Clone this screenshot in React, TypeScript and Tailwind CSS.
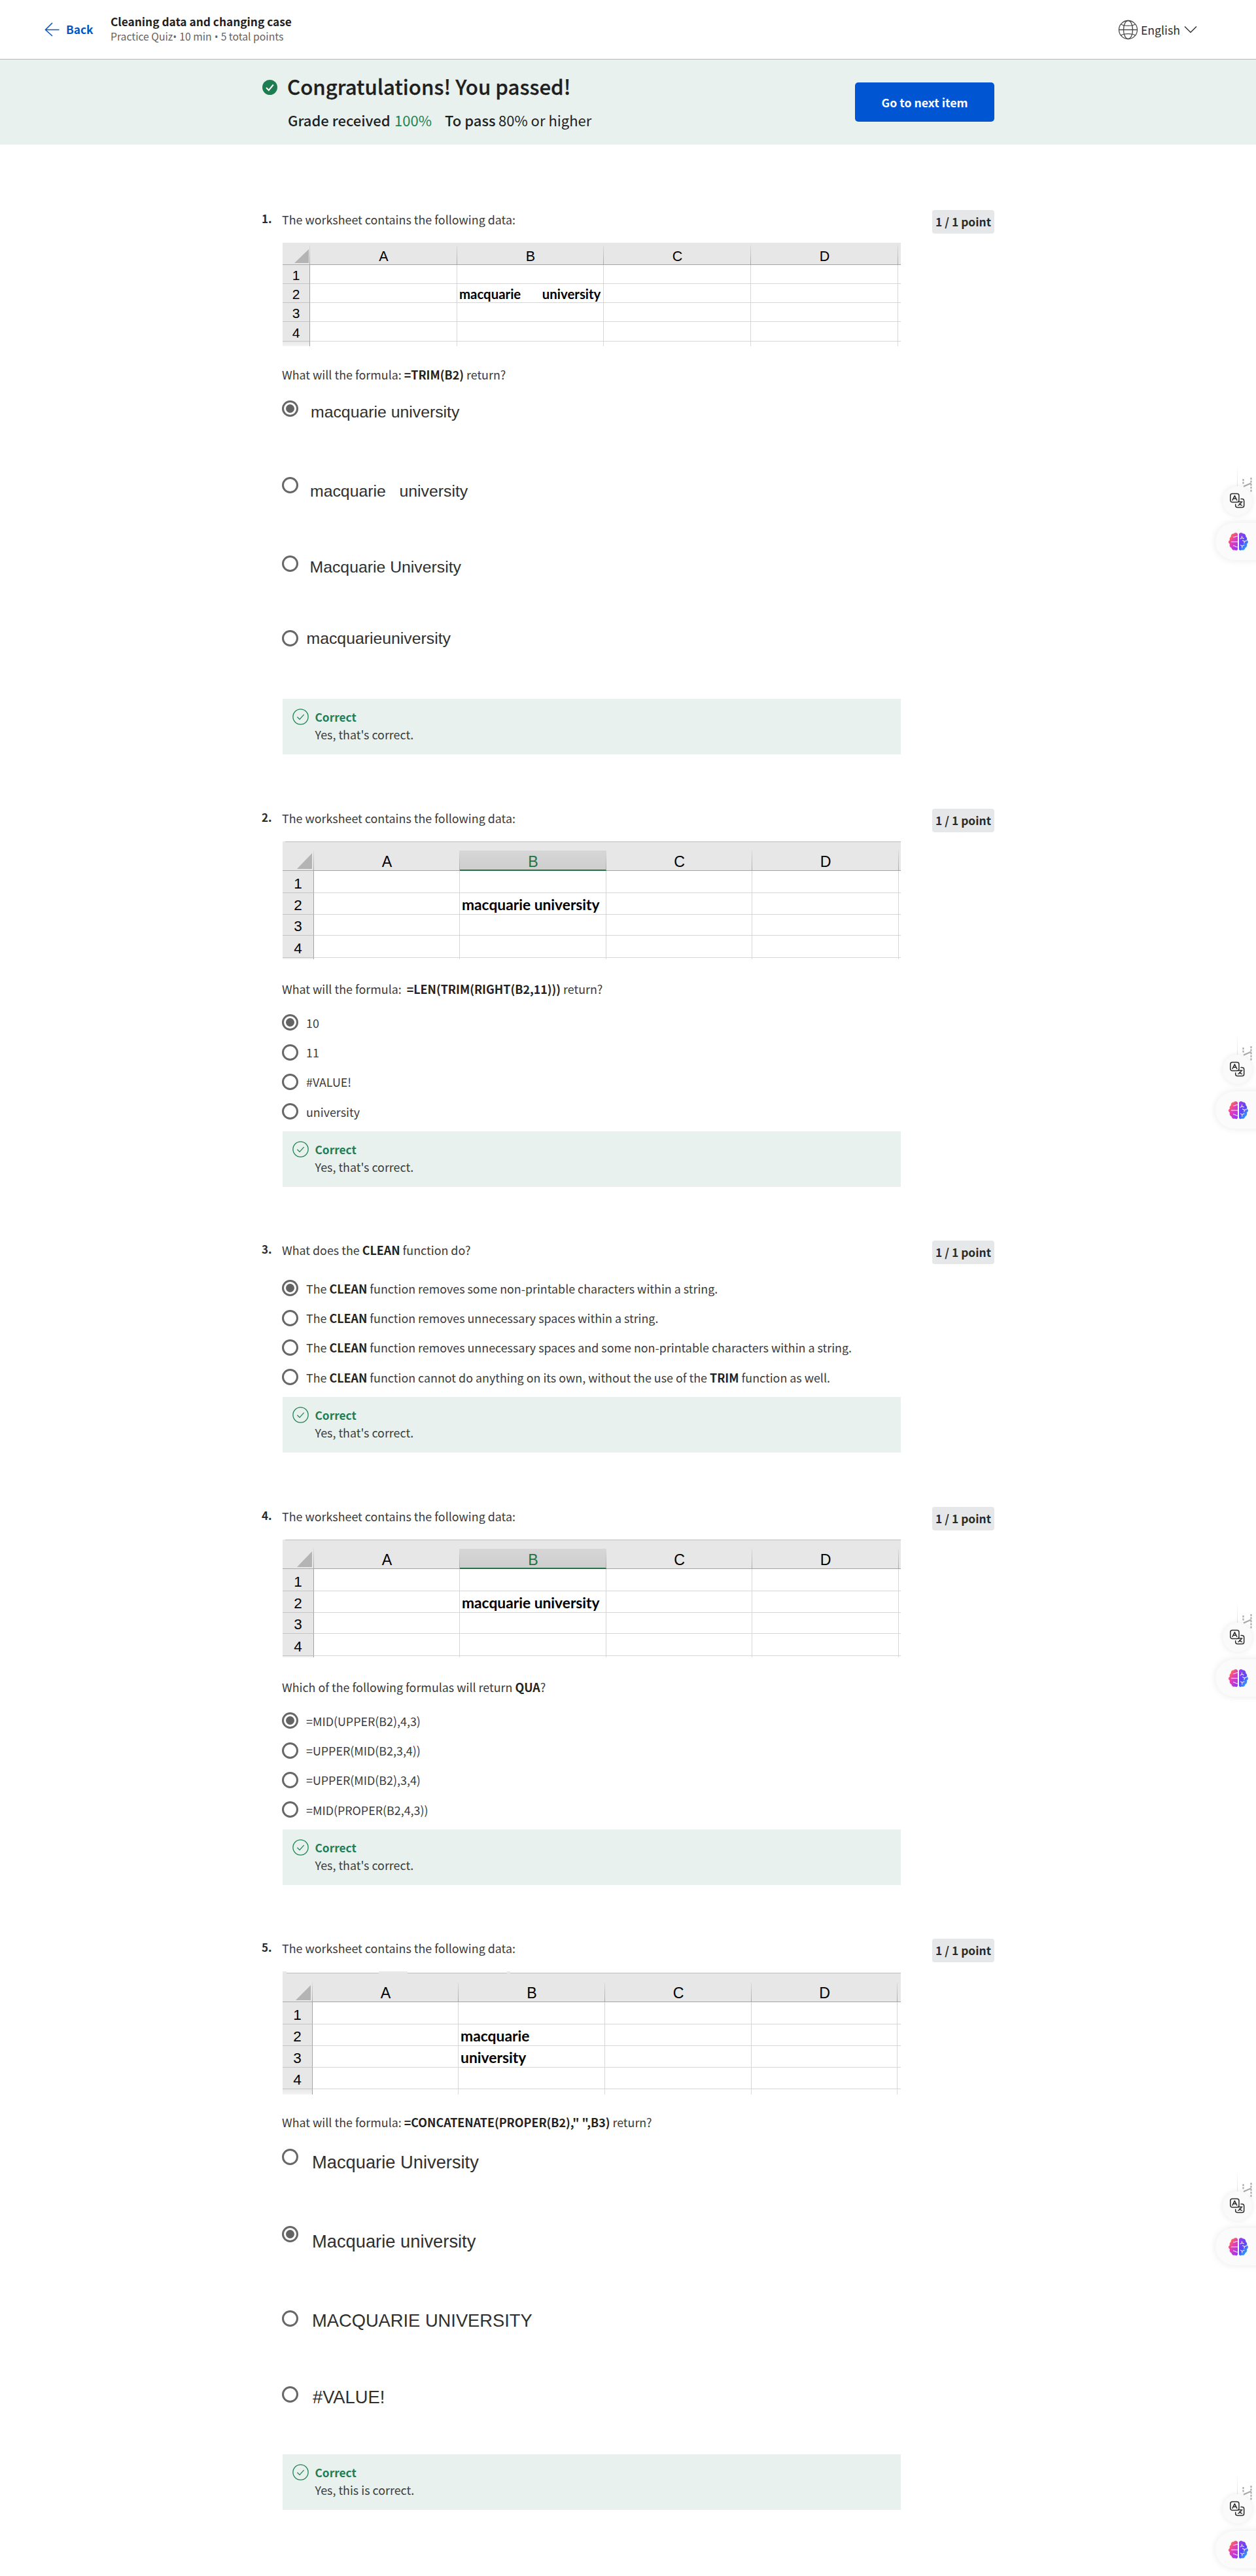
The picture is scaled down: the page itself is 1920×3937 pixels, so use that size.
import type { ReactNode } from "react";

type SheetSpec = {
  grid: string;
  digits: string;
  letters: string;
  cell: string;
  triangle: string;
  letterTop: string;
  selectedB?: boolean;
  tabStrip?: boolean;
  topLine?: boolean;
  b2: string;
  b3?: string;
};

const sheetOne: SheetSpec = {
  grid: "grid-cols-[42px_225px_224px_225px_225px_4px] grid-rows-[34px_29px_29px_29px_30px_7px]",
  letters: "text-[21.5px] leading-[23px]",
  digits: "text-[21px] leading-[24px]",
  cell: "text-[20.4px] leading-[25px] [word-spacing:-0.3px]",
  triangle: "w-[22px] h-[21px] mr-[2px] mb-[2px]",
  letterTop: "top-[4px]",
  b2: "macquarie       university",
};

const sheetTwo: SheetSpec = {
  grid: "grid-cols-[48px_223px_224px_223px_224px_3px] grid-rows-[45px_34px_33px_32px_34px_2px]",
  letters: "text-[23.2px] leading-[25px]",
  digits: "text-[22.5px] leading-[26px]",
  cell: "text-[22.75px] leading-[29px]",
  triangle: "w-[23px] h-[24px] mr-[3px] mb-[2px]",
  letterTop: "top-[14px]",
  selectedB: true,
  topLine: true,
  b2: "macquarie university",
};

const sheetFive: SheetSpec = {
  grid: "grid-cols-[46px_223px_224px_224px_223px_5px] grid-rows-[47px_34px_33px_33px_33px_8px]",
  letters: "text-[23.2px] leading-[26px]",
  digits: "text-[22.5px] leading-[26px]",
  cell: "text-[22.85px] leading-[29px]",
  triangle: "w-[23px] h-[23px] mr-[3px] mb-[2px]",
  letterTop: "top-[17px]",
  tabStrip: true,
  b2: "macquarie",
  b3: "university",
};

function Sheet({ s }: { s: SheetSpec }) {
  const letters = ["A", "B", "C", "D"];
  return (
    <div className="relative ml-px w-[945px] bg-white font-['Liberation_Sans',sans-serif] text-black">
      <div className={`grid ${s.grid}`}>
        <div className="flex items-end justify-end border-b border-[#a9a9a9] bg-[#e7e7e7]">
          <div className={`bg-[#b4b4b4] [clip-path:polygon(100%_0,100%_100%,0_100%)] ${s.triangle}`} />
        </div>
        {letters.map((l) => {
          const selected = s.selectedB && l === "B";
          return (
            <div
              key={l}
              className={`relative flex items-end justify-center border-b border-[#a3a3a3] bg-[#e7e7e7] ${s.letters}`}
            >
              <span className={`absolute bottom-0 left-[-1px] w-px bg-linear-to-b from-[#dcdcdc] to-[#a9a9a9] ${s.letterTop}`} />
              {selected && (
                <span className="absolute inset-x-0 bottom-[-1px] top-[14px] border-b-2 border-[#217346] bg-linear-to-b from-[#d6d6d6] to-[#cecece]" />
              )}
              <span className={selected ? "relative text-[#217346]" : "relative"}>{l}</span>
            </div>
          );
        })}
        <div className="relative border-b border-[#a3a3a3] bg-[#e7e7e7]">
          <span className={`absolute bottom-0 left-[-1px] w-px bg-linear-to-b from-[#dcdcdc] to-[#a9a9a9] ${s.letterTop}`} />
        </div>
        {[1, 2, 3, 4].map((n) => (
          <Row key={n} n={n} s={s} />
        ))}
        <div className="border-r border-[#a3a3a3] bg-linear-to-b from-[#e7e7e7] to-[#f4f4f4]" />
        <div className="border-r border-[#dadada]" />
        <div className="border-r border-[#dadada]" />
        <div className="border-r border-[#dadada]" />
        <div className="border-r border-[#dadada]" />
        <div />
      </div>
      {s.topLine && <div className="absolute left-1 right-0 top-0 h-px bg-[#bdbdbd]" />}
      {s.tabStrip && (
        <div className="absolute inset-x-0 top-0 flex h-[3px]">
          <div className="ml-[6px] w-[141px] border-b border-[#bdbdbd] bg-white" />
          <div className="ml-[44px] w-[152px] border-b border-[#bdbdbd] bg-white" />
          <div className="ml-[5px] grow border-b border-[#bdbdbd] bg-white" />
        </div>
      )}
    </div>
  );
}

function Row({ n, s }: { n: number; s: SheetSpec }) {
  const value = n === 2 ? s.b2 : n === 3 ? s.b3 : undefined;
  return (
    <>
      <div className={`flex items-end justify-center border-b border-r border-b-[#c4c4c4] border-r-[#a3a3a3] bg-[#e7e7e7] ${s.digits}`}>
        {n}
      </div>
      <div className="border-b border-r border-[#d6d6d6]" />
      <div className={`flex items-end whitespace-pre border-b border-r border-[#d6d6d6] pl-[3px] font-['Lato',sans-serif] font-bold ${s.cell}`}>
        {value}
      </div>
      <div className="border-b border-r border-[#d6d6d6]" />
      <div className="border-b border-r border-[#d6d6d6]" />
      <div className="border-b border-[#d6d6d6]" />
    </>
  );
}

function Radio({ on }: { on?: boolean }) {
  return (
    <span className="flex size-[25px] shrink-0 items-center justify-center rounded-full border-3 border-[#676767] bg-white">
      {on && <span className="size-[13px] rounded-full bg-[#636363]" />}
    </span>
  );
}

function Choice({ on, children }: { on?: boolean; children: ReactNode }) {
  return (
    <div className="flex h-[45.4px] items-center text-[#3a3a3a]">
      <Radio on={on} />
      <span className="ml-[12px] leading-[30px] [&_b]:text-[#222]">{children}</span>
    </div>
  );
}

function PictureChoice({ on, box, text, children }: { on?: boolean; box: string; text: string; children: ReactNode }) {
  return (
    <div className={`flex items-start ${box}`}>
      <Radio on={on} />
      <span className={`whitespace-pre font-['Liberation_Sans',sans-serif] leading-[30px] text-[#2f2f2f] ${text}`}>
        {children}
      </span>
    </div>
  );
}

function Feedback({ className, children }: { className?: string; children: ReactNode }) {
  return (
    <div className={`ml-px flex h-[85px] w-[945px] bg-[#e8f1ed] pl-[15px] ${className ?? ""}`}>
      <svg className="mt-[15px] size-[25px]" viewBox="0 0 25 25" fill="none" stroke="#1f8354" strokeWidth="1.3">
        <circle cx="12.5" cy="12.5" r="11.6" />
        <path d="M7.4 12.8l3.6 3.6 6.6-7.3" />
      </svg>
      <div className="ml-[9.5px] pt-[14px] leading-[27px]">
        <div className="text-[17.3px] font-bold text-[#237d54]">Correct</div>
        <div className="text-[#3a3d3c]">{children}</div>
      </div>
    </div>
  );
}

function Question({ n, height, prompt, children }: { n: number; height: string; prompt: ReactNode; children: ReactNode }) {
  return (
    <section className={`flex ${height}`}>
      <div className="w-[31px] text-[17px] font-bold leading-[27px]">{n}.</div>
      <div className="w-[994px] text-[#3a3a3a] [&_b]:text-[#222]">
        <div className="h-[51px] leading-[30px]">{prompt}</div>
        {children}
      </div>
      <div className="mt-px flex h-[36px] w-[95px] items-center justify-center rounded-[4px] bg-[#e5e7e8] text-[17.4px] font-bold text-[#2a2a2a]">
        <span className="whitespace-nowrap">1 / 1 point</span>
      </div>
    </section>
  );
}

function FloatingTools({ top, id }: { top: string; id: string }) {
  return (
    <div className={`absolute right-0 flex h-[168px] w-[80px] flex-col overflow-hidden pt-[43px] ${top}`}>
      <div className="absolute left-[51px] top-[10px] flex h-[38px] w-[29px] bg-white">
        <div className="w-px bg-linear-to-b from-white to-[#dedede]" />
        <svg className="ml-[6px] mt-[19px]" width="20" height="24" viewBox="0 0 20 24" fill="none" stroke="#a9abab" strokeWidth="2.2">
          <path d="M2.500 3v9" strokeDasharray="3 1.6" />
          <path d="M3 14.500L14.500 9.500" />
          <path d="M14.500 1v22" strokeDasharray="3 1.6" />
        </svg>
      </div>
      <div className="relative ml-[29px] flex size-[45px] items-center justify-center rounded-full bg-[#fafafa] shadow-[0_0_9px_rgba(0,0,0,0.09)]">
        <svg width="25" height="25" viewBox="0 0 25 25" fill="none" stroke="#2d2d2d" strokeWidth="1.5" strokeLinecap="round" strokeLinejoin="round">
          <rect x="1.800" y="1.600" width="13.200" height="13" rx="3" />
          <path d="M5 11.400L8.400 4.600l3.400 6.800M6.200 9.200h4.400" />
          <path d="M18 9.500h1.700a3 3 0 0 1 3 3v7a3 3 0 0 1-3 3h-7a3 3 0 0 1-3-3V17.800" />
          <path d="M14 14h6M18.800 14c-.8 2.600-2.600 4.400-5 5.400M15.500 16.600c1 1.500 2.200 2.300 4 2.800" strokeWidth="1.3" />
        </svg>
      </div>
      <div className="relative ml-[18px] mt-[11px] flex h-[57px] w-[90px] shrink-0 items-center rounded-full bg-[#fbfbfb] pl-[19px] shadow-[0_0_12px_rgba(0,0,0,0.09)]">
        <svg width="32" height="30" viewBox="0 0 32 30">
          <defs>
            <linearGradient id={`left-${id}`} x1="0" y1="0" x2="0.7" y2="1">
              <stop offset="0" stopColor="#ff8a1f" />
              <stop offset="0.15" stopColor="#fb7a35" />
              <stop offset="0.5" stopColor="#e83fb0" />
              <stop offset="1" stopColor="#a335ee" />
            </linearGradient>
            <linearGradient id={`right-${id}`} x1="0" y1="0" x2="0.7" y2="1">
              <stop offset="0" stopColor="#a23bf0" />
              <stop offset="0.55" stopColor="#5a48f2" />
              <stop offset="1" stopColor="#18b4ff" />
            </linearGradient>
          </defs>
          <path fill={`url(#left-${id})`} d="M15 3.200C14 .8 10.500.8 9 2.600C6.200 2.600 4.400 4.600 4.600 7.200C2.600 8.600 2.200 10.600 3 12.200C.4 13.800.4 16.800 3 18.200C2 21 3.400 23.400 5.400 24.200C6 27 8.600 28.400 10.800 27.600C12.600 29 14.400 28.400 15 26.600Z" />
          <path fill={`url(#right-${id})`} d="M17 3.200C18 .8 21.500.8 23 2.600C25.800 2.600 27.600 4.600 27.400 7.200C29.400 8.600 29.800 10.600 29 12.200C31.600 13.800 31.600 16.800 29 18.200C30 21 28.600 23.400 26.600 24.200C26 27 23.400 28.400 21.200 27.600C19.400 29 17.600 28.400 17 26.600Z" />
          <g fill="none" stroke="#f7e6fb" strokeWidth="1.1" strokeLinecap="round">
            <path d="M14.600 6.500c-2.600-.4-3.400 1.800-6 1.400M14.600 15H5.500M14.600 23c-2.600.4-3.600-2.200-6.200-2" />
            <path d="M21.500 6.500v2.400l-2.500 1.500M21.500 8.900l3 1M29 13l-3.500 1.600-3-1.600M25.500 14.600l-.6 2.600M19.500 20l2.300 1.600L25 20M21.800 21.600v2.600" />
          </g>
        </svg>
      </div>
    </div>
  );
}

export default function App() {
  return (
    <div className="relative h-[3937px] w-[1920px] overflow-hidden bg-white font-['Noto_Sans_CJK_SC',sans-serif] text-[17.86px] text-[#2a2a2a]">
      <header className="flex h-[91px] items-start border-b border-[#b2bab6] pl-[68px] pr-[90px]">
        <svg className="mt-[34px] h-[22px] w-[23px]" viewBox="0 0 23 22" fill="none" stroke="#0b57c4" strokeWidth="1.6">
          <path d="M1.500 11.500h21M12 1L1.500 11.500L12 21" />
        </svg>
        <span className="ml-[10px] mt-[33px] w-[68px] text-[17.3px] font-bold leading-[24px] text-[#0056c7]">Back</span>
        <div className="mt-[21px]">
          <div className="text-[17.3px] font-bold leading-[24px] text-[#1f1f1f]">Cleaning data and changing case</div>
          <div className="mt-px text-[15.7px] leading-[20px] text-[#636363]">
            Practice Quiz<span className="font-['Open_Sans']">• </span>10 min<span className="font-['Open_Sans']"> • </span>5 total points
          </div>
        </div>
        <div className="ml-auto mt-[29px] flex h-[32px] items-center">
          <svg className="size-[31px]" viewBox="0 0 31 31" fill="none" stroke="#4a4a4a" strokeWidth="1.3">
            <circle cx="15.500" cy="15.500" r="14" />
            <ellipse cx="15.500" cy="15.500" rx="7" ry="14" />
            <path d="M1.500 15.500h28M4.500 7c5 3.200 17 3.200 22 0M4.500 24c5-3.200 17-3.200 22 0" />
          </svg>
          <span className="ml-[4px] text-[17.7px] leading-[30px] text-[#2f2f2f]">English</span>
          <svg className="ml-[6px] h-[12px] w-[20px]" viewBox="0 0 20 12" fill="none" stroke="#333" strokeWidth="1.5">
            <path d="M1 1.500l9 9 9-9" />
          </svg>
        </div>
      </header>

      <div className="flex h-[130px] items-start bg-[#e8f1ed] pl-[401px]">
        <svg className="mt-[31px] size-[23px]" viewBox="0 0 23 23">
          <circle cx="11.500" cy="11.500" r="11.500" fill="#1d7c50" />
          <path d="M6 12l3.800 4 7-8.500" fill="none" stroke="#fff" strokeWidth="2" />
        </svg>
        <div className="ml-[15px] mt-[20.5px] w-[868px] text-[#1f1f1f]">
          <div className="text-[31.2px] font-medium leading-[40px] [-webkit-text-stroke:0.3px_#1f1f1f]">Congratulations! You passed!</div>
          <div className="mt-[16px] flex pl-px text-[22px] leading-[30px]">
            <span className="w-[163px] font-medium">Grade received</span>
            <span className="w-[77px] text-[#1f8354]">100%</span>
            <span className="w-[82px] font-medium">To pass</span>
            <span>80% or higher</span>
          </div>
        </div>
        <button className="mt-[35px] flex h-[60px] w-[213px] items-center justify-center rounded-[5px] bg-[#0056d2] text-[17.7px] font-bold text-white">
          Go to next item
        </button>
      </div>

      <main className="mt-[99px] pl-[400px]">
        <Question n={1} height="h-[915px]" prompt="The worksheet contains the following data:">
          <Sheet s={sheetOne} />
          <p className="mt-[28px] leading-[30px]">
            What will the formula: <b>=TRIM(B2)</b> return?
          </p>
          <div className="mt-[25px]">
            <PictureChoice on box="h-[117px]" text="ml-[19px] mt-[2.5px] text-[24.8px]">macquarie university</PictureChoice>
            <PictureChoice box="h-[120px]" text="ml-[18px] mt-[7px] text-[24.8px]">{"macquarie   university"}</PictureChoice>
            <PictureChoice box="h-[114px]" text="ml-[17.5px] mt-[3px] text-[24.8px]">Macquarie University</PictureChoice>
            <PictureChoice box="h-[105px]" text="ml-[12.5px] mt-[-2.5px] text-[24.8px]">macquarieuniversity</PictureChoice>
          </div>
          <Feedback>Yes, that's correct.</Feedback>
        </Question>

        <Question n={2} height="h-[660px]" prompt="The worksheet contains the following data:">
          <Sheet s={sheetTwo} />
          <p className="mt-[29.5px] whitespace-pre leading-[30px]">
            {"What will the formula:  "}
            <b>=LEN(TRIM(RIGHT(B2,11)))</b> return?
          </p>
          <div className="mt-[14.5px]">
            <Choice on>10</Choice>
            <Choice>11</Choice>
            <Choice>#VALUE!</Choice>
            <Choice>university</Choice>
          </div>
          <Feedback className="mt-[7.4px]">Yes, that's correct.</Feedback>
        </Question>

        <Question n={3} height="h-[407px]" prompt={<>What does the <b>CLEAN</b> function do?</>}>
          <Choice on>The <b>CLEAN</b> function removes some non-printable characters within a string.</Choice>
          <Choice>The <b>CLEAN</b> function removes unnecessary spaces within a string.</Choice>
          <Choice>The <b>CLEAN</b> function removes unnecessary spaces and some non-printable characters within a string.</Choice>
          <Choice>The <b>CLEAN</b> function cannot do anything on its own, without the use of the <b>TRIM</b> function as well.</Choice>
          <Feedback className="mt-[7.4px]">Yes, that's correct.</Feedback>
        </Question>

        <Question n={4} height="h-[660px]" prompt="The worksheet contains the following data:">
          <Sheet s={sheetTwo} />
          <p className="mt-[29.5px] leading-[30px]">
            Which of the following formulas will return <b>QUA</b>?
          </p>
          <div className="mt-[14.5px]">
            <Choice on>=MID(UPPER(B2),4,3)</Choice>
            <Choice>=UPPER(MID(B2,3,4))</Choice>
            <Choice>=UPPER(MID(B2),3,4)</Choice>
            <Choice>=MID(PROPER(B2,4,3))</Choice>
          </div>
          <Feedback className="mt-[7.4px]">Yes, that's correct.</Feedback>
        </Question>

        <Question n={5} height="h-[975px]" prompt="The worksheet contains the following data:">
          <Sheet s={sheetFive} />
          <p className="mt-[27px] leading-[30px]">
            What will the formula: <b>=CONCATENATE(PROPER(B2)," ",B3)</b> return?
          </p>
          <div className="mt-[25.5px]">
            <PictureChoice box="h-[118px]" text="ml-[21px] mt-[6px] text-[27.3px]">Macquarie University</PictureChoice>
            <PictureChoice on box="h-[129px]" text="ml-[21px] mt-[9.5px] text-[27.3px]">Macquarie university</PictureChoice>
            <PictureChoice box="h-[116px]" text="ml-[21px] mt-[1px] text-[27.3px]">MACQUARIE UNIVERSITY</PictureChoice>
            <PictureChoice box="h-[104.5px]" text="ml-[22px] mt-[2.5px] text-[27.3px]">#VALUE!</PictureChoice>
          </div>
          <Feedback>Yes, this is correct.</Feedback>
        </Question>
      </main>

      <FloatingTools id="a" top="top-[700px]" />
      <FloatingTools id="b" top="top-[1569px]" />
      <FloatingTools id="c" top="top-[2437px]" />
      <FloatingTools id="d" top="top-[3306px]" />
      <FloatingTools id="e" top="top-[3769px]" />
    </div>
  );
}
